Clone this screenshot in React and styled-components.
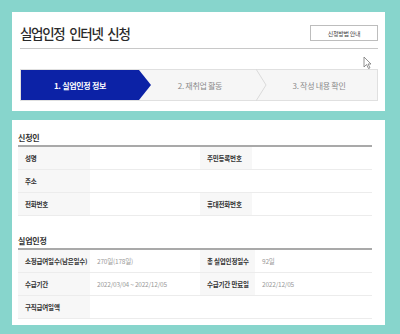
import styled, { createGlobalStyle } from "styled-components";

const GlobalStyle = createGlobalStyle`
  html, body {
    margin: 0;
    padding: 0;
    background: #87d5cc;
  }
  body {
    font-family: "Noto Sans CJK KR", "Noto Sans", sans-serif;
    color: #333;
  }
`;

const Page = styled.div`
  width: 400px;
  height: 334px;
  box-sizing: border-box;
  padding: 12px 15px 0 12px;
  display: flex;
  flex-direction: column;
  gap: 9px;
`;

const Panel = styled.section`
  position: relative;
  background: #fff;
  box-sizing: border-box;
  padding: ${(p) => p.$pad};
`;

const TitleBar = styled.div`
  display: flex;
  align-items: center;
  justify-content: space-between;
  height: 28px;
  border-bottom: 1px solid #c8c8c8;
  padding-bottom: 1px;
`;

const Title = styled.h1`
  margin: 0;
  font-size: 13.5px;
  font-weight: 500;
  letter-spacing: -1.3px;
  word-spacing: 3px;
  color: #2a2a2a;
`;

const GuideButton = styled.button`
  width: 68px;
  height: 16px;
  border: 1px solid #bdbdbd;
  background: #fff;
  font-family: inherit;
  font-size: 6px;
  color: #444;
  padding: 0;
  letter-spacing: -0.3px;
`;

const Steps = styled.ol`
  list-style: none;
  margin: 20px 0 0;
  padding: 0;
  display: grid;
  grid-template-columns: 118px 118px 1fr;
  height: 32px;
  border: 1px solid #e0e0e0;
  box-sizing: border-box;
  background: #f6f6f6;
`;

const Step = styled.li`
  position: relative;
  display: flex;
  align-items: center;
  justify-content: center;
  font-size: 8px;
  letter-spacing: -0.3px;
  color: ${(p) => (p.$active ? "#fff" : "#8a8a8a")};
  background: ${(p) => (p.$active ? "#0c22a6" : "transparent")};
  font-weight: ${(p) => (p.$active ? 600 : 400)};
  padding-left: ${(p) => (p.$active ? "0" : "4px")};

  &::after {
    content: "";
    display: ${(p) => (p.$active ? "block" : "none")};
    position: absolute;
    left: 100%;
    top: 0;
    border-top: 15px solid transparent;
    border-bottom: 15px solid transparent;
    border-left: 12px solid #0c22a6;
    z-index: 2;
  }
`;

const Chevron = styled.svg`
  position: absolute;
  right: -10px;
  top: -1px;
  width: 11px;
  height: 32px;
`;

const Cursor = styled.svg`
  position: absolute;
  left: 351px;
  top: 44px;
  width: 9px;
  height: 13px;
`;

const SectionTitle = styled.h2`
  margin: ${(p) => (p.$first ? "0" : "17px 0 0")};
  font-size: 8px;
  font-weight: 700;
  height: 15px;
  line-height: 15px;
  color: #333;
  letter-spacing: -0.2px;
`;

const Table = styled.div`
  border-top: 2px solid #a9a9a9;
  display: grid;
  grid-template-columns: 72px 110px ${(p) => p.$right}px 1fr;
`;

const Cell = styled.div`
  height: 23px;
  box-sizing: border-box;
  border-bottom: 1px solid #ececec;
  display: flex;
  align-items: center;
  padding-left: 7px;
  font-size: 6.5px;
  letter-spacing: -0.2px;
  background: ${(p) => (p.$label ? "#f7f7f7" : "#fff")};
  color: ${(p) => (p.$label ? "#333" : "#999")};
  font-weight: ${(p) => (p.$label ? 600 : 400)};
  grid-column: ${(p) => p.$span || "auto"};
`;

const Field = ({ label, value, span }) => (
  <>
    <Cell $label>{label}</Cell>
    <Cell $span={span}>{value}</Cell>
  </>
);

const ChevronLine = () => (
  <Chevron viewBox="0 0 11 32">
    <polyline points="0,0 10,16 0,32" fill="none" stroke="#dadada" strokeWidth="1" />
  </Chevron>
);

export default function App() {
  return (
    <>
      <GlobalStyle />
      <Page>
        <Panel $pad="7px 7px 10px 8px">
          <TitleBar>
            <Title>실업인정 인터넷 신청</Title>
            <GuideButton>신청방법 안내</GuideButton>
          </TitleBar>
          <Steps>
            <Step $active>1. 실업인정 정보</Step>
            <Step>
              2. 재취업 활동
              <ChevronLine />
            </Step>
            <Step>3. 작성 내용 확인</Step>
          </Steps>
          <Cursor viewBox="0 0 9 13">
            <path d="M1 1 L1 11 L3.5 8.5 L5.5 12.5 L7 11.8 L5 8 L8 8 Z" fill="#fff" stroke="#777" strokeWidth="0.8" />
          </Cursor>
        </Panel>

        <Panel $pad="10px 13px 6px 6px" style={{ height: 205 }}>
          <SectionTitle $first>신청인</SectionTitle>
          <Table $right={52}>
            <Field label="성명" value="" />
            <Field label="주민등록번호" value="" />
            <Field label="주소" value="" span="2 / 5" />
            <Field label="전화번호" value="" />
            <Field label="휴대전화번호" value="" />
          </Table>

          <SectionTitle>실업인정</SectionTitle>
          <Table $right={55}>
            <Field label="소정급여일수(남은일수)" value="270일(178일)" />
            <Field label="총 실업인정일수" value="92일" />
            <Field label="수급기간" value="2022/03/04 ~ 2022/12/05" />
            <Field label="수급기간 만료일" value="2022/12/05" />
            <Field label="구직급여일액" value="" span="2 / 5" />
          </Table>
        </Panel>
      </Page>
    </>
  );
}
